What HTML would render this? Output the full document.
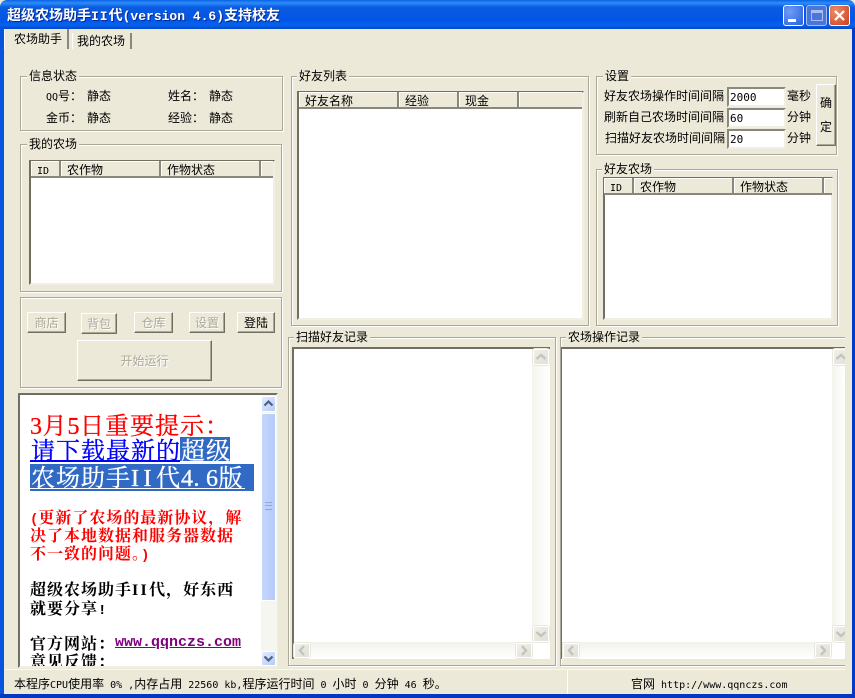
<!DOCTYPE html>
<html><head><meta charset="utf-8">
<style>
html,body{margin:0;padding:0;width:855px;height:698px;overflow:hidden;background:#ECE9D8}
body{position:relative;font:12px/14px "WenQuanYi Zen Hei","Noto Sans CJK SC",sans-serif;color:#000}
div{position:absolute;white-space:nowrap;box-sizing:border-box}
svg{position:absolute;left:0;top:0}
.m{font-family:"DejaVu Sans Mono",monospace;font-size:10px;white-space:pre}
.g{border:1px solid #ACA899;box-shadow:inset 1px 1px #fff,1px 1px #fff}
.l{background:#ECE9D8;padding:0 2px;height:14px}
.t{height:14px}
.lv{background:#fff;border:2px solid;border-color:#716F64 #F1EFE2 #F1EFE2 #716F64}
.h{background:#ECE9D8;border-right:2px solid #8a887c;border-bottom:2px solid #8a887c;box-shadow:inset 1px 1px #fff;padding:2px 0 0 6px;height:17px}
.b{background:#ECE9D8;border:1px solid;border-color:#fff #716F64 #716F64 #fff;box-shadow:inset -1px -1px #ACA899;text-align:center;color:#ACA899;text-shadow:1px 1px #fff}
.i{background:#fff;border:2px solid;border-color:#8a887c #F1EFE2 #F1EFE2 #8a887c;padding:2px 0 0 1px;font-family:"DejaVu Sans Mono",monospace;font-size:11px}
.sb{border:1px solid #fff;border-radius:2px;background:linear-gradient(135deg,#f0f0ea,#e0e0d6);box-shadow:0 0 0 1px #e8e8e0}
.sb path{fill:none;stroke:#c4c4bc;stroke-width:2.4}
.sa{border:1px solid #fff;border-radius:2px;background:linear-gradient(135deg,#e3ecff,#b6caf7)}
.sa path{fill:none;stroke:#4d6185;stroke-width:2.2}
.s{font-family:"Noto Serif CJK SC",serif;font-weight:700;font-size:16px;line-height:18px;letter-spacing:1px}
.s b{font:bold 14px/18px "Liberation Mono",monospace;letter-spacing:0}
.s i{font:bold 16px/18px "Liberation Serif",serif;letter-spacing:2.3px}
.big{font-family:"Noto Serif CJK SC",serif;font-size:24px;line-height:27px;letter-spacing:1px;-webkit-text-stroke:.3px currentColor}
.big b{font:normal 24px/27px "Liberation Serif",serif;letter-spacing:.5px}
</style></head><body>

<!-- title bar -->
<div style="left:0;top:0;width:855px;height:29px;background:linear-gradient(#0a62e6 0,#2e8cf8 3px,#0a5ce2 7px,#0355e6 20px,#0463ee 25px,#0347c8 29px);border-radius:7px 7px 0 0"></div>
<div style="left:7px;top:7px;height:16px;color:#fff;font:bold 14px/16px 'WenQuanYi Zen Hei','Noto Sans CJK SC',sans-serif;text-shadow:1px 1px #0a2a8a">超级农场助手<span style="font:bold 13px/16px 'Liberation Mono',monospace;letter-spacing:1px">II</span>代<span style="font:bold 13px/16px 'Liberation Mono',monospace">(version 4.6)</span>支持校友</div>
<div style="left:783px;top:5px;width:21px;height:21px;border:1px solid #fff;border-radius:3px;background:radial-gradient(circle at 30% 30%,#6f9cf5,#2a5fe0)"><div style="left:4px;top:13px;width:8px;height:3px;background:#fff"></div></div>
<div style="left:806px;top:5px;width:21px;height:21px;border:1px solid #a9bdf0;border-radius:3px;background:#4a76dc"><div style="left:4px;top:4px;width:12px;height:11px;border:1px solid #a9bdf0;border-top-width:3px"></div></div>
<div style="left:829px;top:5px;width:21px;height:21px;border:1px solid #fff;border-radius:3px;background:radial-gradient(circle at 30% 30%,#ec8d6d,#c9401b)">
<svg width="19" height="19"><path d="M5 5L14 14M14 5L5 14" stroke="#fff" stroke-width="2.2"/></svg></div>

<!-- window border -->
<div style="left:0;top:28px;width:4px;height:670px;background:#0855dd"></div>
<div style="left:852px;top:28px;width:3px;height:670px;background:#0339c8"></div>
<div style="left:0;top:694px;width:855px;height:4px;background:#0339c0"></div>

<!-- tabs -->
<div style="left:4px;top:29px;width:65px;height:20px;background:#ECE9D8;border-right:2px solid #8a887c;border-left:1px solid #fff;padding:3px 0 0 9px">农场助手</div>
<div style="left:72px;top:33px;width:60px;height:16px;border-right:2px solid #8a887c;border-left:1px solid #fff;padding:1px 0 0 4px">我的农场</div>

<!-- 信息状态 -->
<div class="g" style="left:20px;top:76px;width:263px;height:55px"></div>
<div class="l" style="left:27px;top:69px">信息状态</div>
<div class="t" style="left:46px;top:89px"><span class="m">QQ</span>号：</div><div class="t" style="left:87px;top:89px">静态</div>
<div class="t" style="left:168px;top:89px">姓名：</div><div class="t" style="left:209px;top:89px">静态</div>
<div class="t" style="left:46px;top:111px">金币：</div><div class="t" style="left:87px;top:111px">静态</div>
<div class="t" style="left:168px;top:111px">经验：</div><div class="t" style="left:209px;top:111px">静态</div>

<!-- 我的农场 -->
<div class="g" style="left:20px;top:144px;width:262px;height:148px"></div>
<div class="l" style="left:27px;top:137px">我的农场</div>
<div class="lv" style="left:29px;top:160px;width:246px;height:125px"></div>
<div class="h" style="left:31px;top:161px;width:30px"><span class="m">ID</span></div>
<div class="h" style="left:61px;top:161px;width:100px">农作物</div>
<div class="h" style="left:161px;top:161px;width:100px">作物状态</div>
<div class="h" style="left:261px;top:161px;width:12px;border-right:0"></div>

<!-- buttons -->
<div class="g" style="left:20px;top:297px;width:262px;height:91px"></div>
<div class="b" style="left:27px;top:312px;width:39px;height:21px;padding-top:3px">商店</div>
<div class="b" style="left:81px;top:313px;width:36px;height:21px;padding-top:3px">背包</div>
<div class="b" style="left:134px;top:312px;width:39px;height:21px;padding-top:3px">仓库</div>
<div class="b" style="left:189px;top:312px;width:36px;height:21px;padding-top:3px">设置</div>
<div class="b" style="left:237px;top:312px;width:38px;height:21px;padding-top:3px;color:#000;text-shadow:none">登陆</div>
<div class="b" style="left:77px;top:340px;width:135px;height:41px;padding-top:13px">开始运行</div>

<!-- rich text -->
<div style="left:18px;top:393px;width:260px;height:275px;background:#fff;border:2px solid;border-color:#716F64 #F1EFE2 #F1EFE2 #716F64;overflow:hidden"></div>
<div style="left:20px;top:395px;width:241px;height:271px;overflow:hidden">
 <div class="big" style="left:10px;top:15px;color:#f00"><b>3</b>月<b>5</b>日重要提示：</div>
 <div style="left:10px;top:42px;width:150px;height:25px;border-bottom:2px solid #00f"></div>
 <div style="left:160px;top:42px;width:50px;height:24px;background:#316AC5"></div>
 <div style="left:10px;top:69px;width:224px;height:27px;background:#316AC5"></div>
 <div class="big" style="left:11px;top:40px;color:#00f">请下载最新的<span style="color:#fff">超级</span></div>
 <div class="big" style="left:11px;top:67px;color:#fff">农场助手<b style="letter-spacing:4.5px">II</b>代<b>4</b><b style="letter-spacing:6.5px">.</b><b>6</b>版</div>
 <div style="left:10px;top:93px;width:215px;height:1px;background:#fff"></div>
 <div class="s" style="left:10px;top:113px;color:#f00"><b>(</b>更新了农场的最新协议，解</div>
 <div class="s" style="left:10px;top:131px;color:#f00">决了本地数据和服务器数据</div>
 <div class="s" style="left:10px;top:149px;color:#f00">不一致的问题。<b>)</b></div>
 <div class="s" style="left:10px;top:185px">超级农场助手<i>II</i>代，好东西</div>
 <div class="s" style="left:10px;top:204px">就要分享<b>!</b></div>
 <div class="s" style="left:10px;top:239px">官方网站：</div>
 <div style="left:95px;top:240px;color:#800080;font:bold 15px/16px 'Liberation Mono',monospace;text-decoration:underline">www.qqnczs.com</div>
 <div class="s" style="left:10px;top:257px">意见反馈：</div>
</div>
<!-- rich scrollbar -->
<div style="left:261px;top:395px;width:16px;height:271px;background:#F6F6F0"></div>
<div class="sa" style="left:261px;top:396px;width:15px;height:16px"><svg width="13" height="14"><path d="M2.5 8.5L6.5 4.5L10.5 8.5"/></svg></div>
<div class="sa" style="left:261px;top:413px;width:15px;height:188px;background:linear-gradient(90deg,#c6d6fc,#b5cafa)"></div>
<div style="left:265px;top:502px;width:7px;height:8px;border-top:1px solid #8ea6e0;border-bottom:1px solid #8ea6e0"><div style="left:0;top:2px;width:7px;height:1px;background:#8ea6e0"></div></div>
<div class="sa" style="left:261px;top:651px;width:15px;height:15px"><svg width="13" height="13"><path d="M2.5 4.5L6.5 8.5L10.5 4.5"/></svg></div>

<!-- 好友列表 -->
<div class="g" style="left:291px;top:76px;width:298px;height:250px"></div>
<div class="l" style="left:297px;top:69px">好友列表</div>
<div class="lv" style="left:297px;top:91px;width:287px;height:229px"></div>
<div class="h" style="left:299px;top:92px;width:100px">好友名称</div>
<div class="h" style="left:399px;top:92px;width:60px">经验</div>
<div class="h" style="left:459px;top:92px;width:60px">现金</div>
<div class="h" style="left:519px;top:92px;width:63px;border-right:0"></div>

<!-- 设置 -->
<div class="g" style="left:596px;top:76px;width:241px;height:79px"></div>
<div class="l" style="left:603px;top:69px">设置</div>
<div class="t" style="left:604px;top:89px">好友农场操作时间间隔</div>
<div class="t" style="left:604px;top:110px">刷新自己农场时间间隔</div>
<div class="t" style="left:605px;top:131px">扫描好友农场时间间隔</div>
<div class="i" style="left:727px;top:87px;width:59px;height:20px">2000</div>
<div class="i" style="left:727px;top:108px;width:59px;height:20px">60</div>
<div class="i" style="left:727px;top:129px;width:59px;height:20px">20</div>
<div class="t" style="left:787px;top:89px">毫秒</div>
<div class="t" style="left:787px;top:110px">分钟</div>
<div class="t" style="left:787px;top:131px">分钟</div>
<div class="b" style="left:816px;top:84px;width:20px;height:62px;color:#000;text-shadow:none;padding-top:6px;line-height:24px;white-space:normal">确<br>定</div>

<!-- 好友农场 -->
<div class="g" style="left:596px;top:169px;width:242px;height:157px"></div>
<div class="l" style="left:602px;top:162px">好友农场</div>
<div class="lv" style="left:603px;top:177px;width:230px;height:143px"></div>
<div class="h" style="left:604px;top:178px;width:30px"><span class="m">ID</span></div>
<div class="h" style="left:634px;top:178px;width:100px">农作物</div>
<div class="h" style="left:734px;top:178px;width:90px">作物状态</div>
<div class="h" style="left:824px;top:178px;width:8px;border-right:0"></div>

<!-- 扫描好友记录 -->
<div class="g" style="left:288px;top:337px;width:268px;height:329px"></div>
<div class="l" style="left:294px;top:330px">扫描好友记录</div>
<div style="left:292px;top:347px;width:258px;height:312px;background:#fff;border:2px solid;border-color:#716F64 #F1EFE2 #F1EFE2 #716F64;border-right:0;border-bottom:0"></div>
<div style="left:532px;top:349px;width:18px;height:293px;background:linear-gradient(90deg,#f4f4ee,#fff)"></div>
<div class="sb" style="left:533px;top:349px;width:16px;height:16px"><svg width="14" height="14"><path d="M2.5 9L7 5L11.5 9"/></svg></div>
<div class="sb" style="left:533px;top:626px;width:16px;height:16px"><svg width="14" height="14"><path d="M2.5 5L7 9L11.5 5"/></svg></div>
<div style="left:294px;top:642px;width:238px;height:17px;background:linear-gradient(#f2f2ec,#fff)"></div>
<div class="sb" style="left:294px;top:643px;width:16px;height:15px"><svg width="14" height="13"><path d="M9 2L5 6.5L9 11"/></svg></div>
<div class="sb" style="left:516px;top:643px;width:16px;height:15px"><svg width="14" height="13"><path d="M5 2L9 6.5L5 11"/></svg></div>

<!-- 农场操作记录 -->
<div style="left:560px;top:337px;width:285px;height:330px;overflow:hidden">
 <div class="g" style="left:0;top:0;width:300px;height:329px"></div>
 <div style="left:1px;top:10px;width:290px;height:312px;background:#fff;border-top:2px solid #716F64;border-left:1px solid #716F64"></div>
 <div style="left:272px;top:12px;width:13px;height:293px;background:linear-gradient(90deg,#f4f4ee,#fff)"></div>
 <div class="sb" style="left:273px;top:12px;width:16px;height:16px"><svg width="14" height="14"><path d="M2.5 9L7 5L11.5 9"/></svg></div>
 <div class="sb" style="left:273px;top:289px;width:16px;height:16px"><svg width="14" height="14"><path d="M2.5 5L7 9L11.5 5"/></svg></div>
 <div style="left:2px;top:305px;width:270px;height:17px;background:linear-gradient(#f2f2ec,#fff)"></div>
 <div class="sb" style="left:3px;top:306px;width:16px;height:15px"><svg width="14" height="13"><path d="M9 2L5 6.5L9 11"/></svg></div>
 <div class="sb" style="left:255px;top:306px;width:16px;height:15px"><svg width="14" height="13"><path d="M5 2L9 6.5L5 11"/></svg></div>
</div>
<div class="l" style="left:566px;top:330px">农场操作记录</div>

<!-- status bar -->
<div style="left:4px;top:669px;width:841px;height:1px;background:#F8F7F0"></div>
<div style="left:567px;top:670px;width:1px;height:24px;background:#fff"></div>
<div class="t" style="left:14px;top:677px">本程序<span class="m">CPU</span>使用率<span class="m"> 0% ,</span>内存占用<span class="m"> 22560 kb,</span>程序运行时间<span class="m"> 0 </span>小时<span class="m"> 0 </span>分钟<span class="m"> 46 </span>秒。</div>
<div class="t" style="left:631px;top:677px">官网<span class="m"> http://www.qqnczs.com</span></div>
</body></html>
